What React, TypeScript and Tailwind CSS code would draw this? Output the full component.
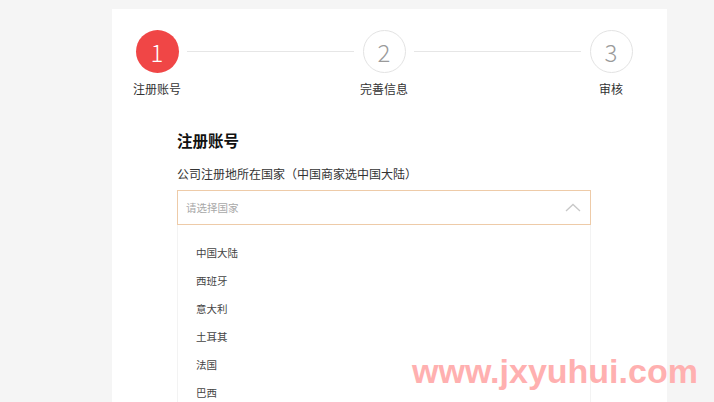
import React from "react";

const countries = ["中国大陆", "西班牙", "意大利", "土耳其", "法国", "巴西"];

function Step({ n, label, active }: { n: number; label: string; active?: boolean }) {
  return (
    <div className="flex w-[60px] shrink-0 flex-col items-center">
      <div
        className={
          active
            ? "flex h-[43px] w-[43px] items-center justify-center rounded-full bg-[#f04646] text-[24px] font-light text-white"
            : "flex h-[43px] w-[43px] items-center justify-center rounded-full border border-[#e3e3e3] bg-white text-[24px] font-light text-[#9a9a9a]"
        }
      >
        {n}
      </div>
      <div className="mt-[8px] whitespace-nowrap text-[12px] leading-[16px] text-[#333]">{label}</div>
    </div>
  );
}

export default function App() {
  return (
    <div
      className="relative h-[402px] w-[714px] overflow-hidden bg-[#f5f5f5]"
      style={{ fontFamily: '"Noto Sans CJK SC", "Noto Sans", sans-serif' }}
    >
      <div className="ml-[112px] mt-[9px] flex h-[400px] w-[555px] flex-col bg-white">
        <div className="ml-[15px] mt-[21px] flex w-[514px] items-start">
          <Step n={1} label="注册账号" active />
          <div className="mt-[21px] h-px flex-1 bg-[#e6e6e6]" />
          <Step n={2} label="完善信息" />
          <div className="mt-[21px] h-px flex-1 bg-[#e6e6e6]" />
          <Step n={3} label="审核" />
        </div>

        <div className="ml-[65px] mt-[31px] flex w-[414px] flex-col">
          <div className="text-[15.5px] font-bold leading-[24px] text-[#111]">注册账号</div>
          <div className="mt-[14px] text-[12px] leading-[16px] text-[#333]">公司注册地所在国家（中国商家选中国大陆）</div>
          <div className="mt-[8px] flex h-[35px] items-center justify-between border border-[#eecba8] px-[8px]">
            <span className="text-[10.5px] text-[#a8a8a8]">请选择国家</span>
            <svg width="16" height="9" viewBox="0 0 16 9" className="mr-[1px]">
              <path d="M1 8 L8 1.5 L15 8" fill="none" stroke="#c8c8c8" strokeWidth="1.3" />
            </svg>
          </div>
          <div className="flex flex-col border-x border-[#f3f3f3] pt-[14px]">
            {countries.map((c) => (
              <div key={c} className="flex h-[28px] items-center pl-[18px] text-[10.5px] text-[#444]">
                {c}
              </div>
            ))}
          </div>
        </div>
      </div>

      <div
        className="absolute left-[412px] top-[354px] whitespace-nowrap text-[34px] font-bold leading-[34px] text-[#ffb0b0]"
        style={{ fontFamily: '"Liberation Sans", sans-serif' }}
      >
        www.jxyuhui.com
      </div>
    </div>
  );
}
